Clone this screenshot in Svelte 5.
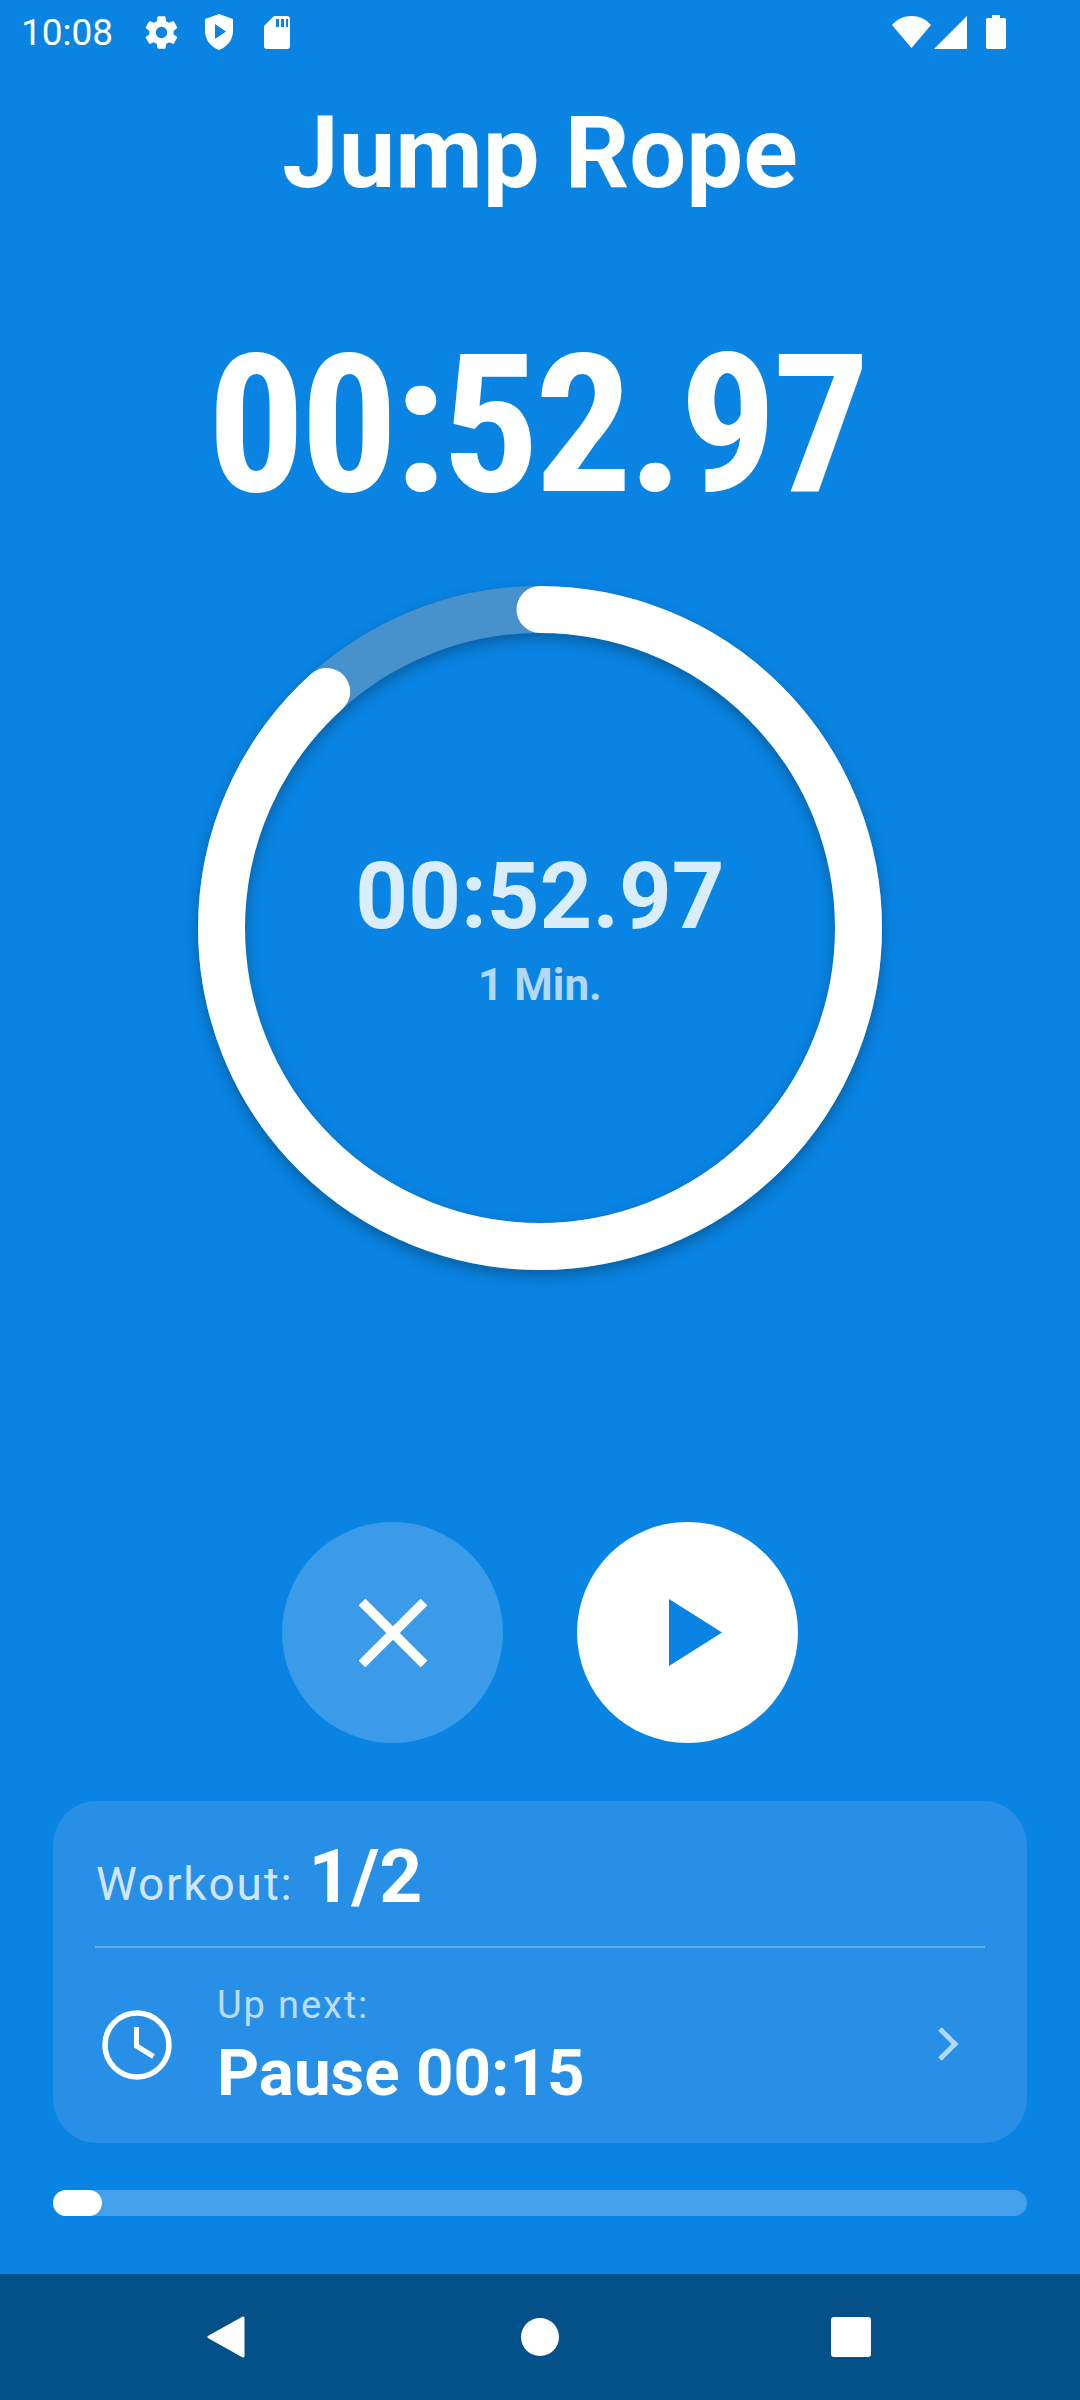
<script>
  const r = 318.5;
  const circumference = 2 * Math.PI * r;
  const elapsed = 52.97 / 60;
  const dash = circumference * elapsed;
</script>

<main class="screen">
  <header class="status">
    <span class="clock">10:08</span>
    <svg class="ic gear" width="39" height="39" viewBox="0 0 24 24"><path fill="#fff" d="M19.4 13c.04-.32.1-.66.1-1s-.06-.68-.1-1l2.1-1.65c.2-.15.25-.42.13-.64l-2-3.46c-.12-.22-.39-.3-.61-.22l-2.49 1c-.52-.39-1.06-.73-1.69-.98l-.37-2.65A.506.506 0 0 0 14 2h-4c-.25 0-.46.18-.5.42l-.37 2.65c-.63.25-1.17.59-1.69.98l-2.49-1c-.22-.08-.49 0-.61.22l-2 3.46c-.13.22-.07.49.12.64L4.57 11c-.04.32-.07.66-.07 1s.03.68.07 1l-2.11 1.65c-.19.15-.25.42-.12.64l2 3.46c.12.22.39.3.61.22l2.49-1c.52.39 1.06.73 1.69.98l.37 2.65c.04.24.25.42.5.42h4c.25 0 .46-.18.5-.42l.37-2.65c.63-.25 1.17-.59 1.69-.98l2.49 1c.22.08.49 0 .61-.22l2-3.46c.12-.22.07-.49-.13-.64L19.4 13zM12 15.500a3.500 3.500 0 1 1 0-7 3.500 3.500 0 0 1 0 7z"/></svg>
    <svg class="ic shield" width="28" height="36" viewBox="0 0 28 36"><path fill="#fff" fill-rule="evenodd" d="M14 0 28 5v12c0 9-6 16-14 19C6 33 0 26 0 17V5zM10 10v15l11-7.500z"/></svg>
    <svg class="ic sd" width="26" height="33" viewBox="0 0 26 33"><path fill="#fff" fill-rule="evenodd" d="M10 0h13a3 3 0 0 1 3 3v27a3 3 0 0 1-3 3H3a3 3 0 0 1-3-3V10zM12 3v8h3V3zM17 3v8h3V3zM22 3v8h2V3z"/></svg>
    <span class="spacer"></span>
    <svg class="ic" width="39" height="32" viewBox="0 0 39 32"><path fill="#fff" d="M19.500 0C27 0 34 3 39 9L19.500 32 0 9C5 3 12 0 19.500 0z"/></svg>
    <svg class="ic cell" width="33" height="33" viewBox="0 0 33 33"><path fill="#fff" d="M33 0v33H0z"/></svg>
    <svg class="ic bat" width="20" height="34" viewBox="0 0 20 34"><path fill="#fff" d="M6 0h8v3h4a2 2 0 0 1 2 2v27a2 2 0 0 1-2 2H2a2 2 0 0 1-2-2V5a2 2 0 0 1 2-2h4z"/></svg>
  </header>

  <h1 class="title">Jump Rope</h1>
  <div class="bigtime">00:52.97</div>

  <section class="dial">
    <svg class="ring" width="720" height="720" viewBox="0 0 720 720">
      <g class="ringshadow">
        <circle cx="360" cy="360" {r} fill="none" stroke="#4791cc" stroke-width="47" />
        <circle
          cx="360"
          cy="360"
          {r}
          fill="none"
          stroke="#fff"
          stroke-width="47"
          stroke-linecap="round"
          stroke-dasharray="{dash} {circumference}"
          transform="rotate(-90 360 360)"
        />
      </g>
    </svg>
    <div class="readout">
      <div class="remain">00:52.97</div>
      <div class="len">1 Min.</div>
    </div>
  </section>

  <div class="controls">
    <button class="round stop" aria-label="Stop">
      <svg width="68" height="68" viewBox="0 0 68 68"><path stroke="#fff" stroke-width="9.500" d="M3 3l62 62M65 3 3 65"/></svg>
    </button>
    <button class="round play" aria-label="Play">
      <svg width="53" height="67" viewBox="0 0 53 67"><path fill="#0984e3" d="M0 0l53 33.500L0 67z"/></svg>
    </button>
  </div>

  <section class="card">
    <div class="workout"><span class="wlabel">Workout:</span> <b>1/2</b></div>
    <div class="rule"></div>
    <div class="next">
      <svg class="clockic" width="70" height="70" viewBox="0 0 70 70">
        <circle cx="35" cy="35" r="32" fill="none" stroke="#fff" stroke-width="5.500" />
        <path fill="none" stroke="#fff" stroke-width="5" d="M34.500 17v19l17 10.500"/>
      </svg>
      <div class="nexttext">
        <div class="uplabel">Up next:</div>
        <div class="upvalue">Pause 00:15</div>
      </div>
      <svg class="chev" width="24" height="36" viewBox="0 0 24 36"><path fill="none" stroke="#fff" stroke-opacity=".65" stroke-width="5" d="M4 3l15 15L4 33"/></svg>
    </div>
  </section>

  <div class="progress"><div class="fill" style="width:{49}px"></div></div>

  <nav class="navbar">
    <svg width="38" height="42" viewBox="0 0 38 42"><path fill="#fff" stroke="#fff" stroke-width="3" stroke-linejoin="round" d="M36 2v38L2 21z"/></svg>
    <span class="dot"></span>
    <span class="sq"></span>
  </nav>
</main>

<style>
  :global(body) {
    margin: 0;
    background: #0984e3;
  }

  .screen {
    width: 1080px;
    height: 2400px;
    background: #0984e3;
    display: flex;
    flex-direction: column;
    font-family: Roboto, sans-serif;
    color: #fff;
    overflow: hidden;
  }

  .status {
    height: 64px;
    display: flex;
    align-items: center;
    padding: 0 74px 0 21px;
    box-sizing: border-box;
    flex: none;
  }

  .clock {
    font-size: 37px;
    width: 121px;
  }

  .ic {
    flex: none;
  }

  .shield {
    margin-left: 24px;
  }

  .sd {
    margin-left: 31px;
  }

  .spacer {
    flex: 1;
  }

  .cell {
    margin-left: 3px;
  }

  .bat {
    margin-left: 19px;
  }

  .title {
    margin: 30px 0 0;
    font-size: 101px;
    line-height: 118px;
    font-weight: 700;
    text-align: center;
  }

  .bigtime {
    margin-top: 98px;
    padding-right: 7px;
    font-size: 193px;
    line-height: 230px;
    font-weight: 700;
    text-align: center;
    font-stretch: 75%;
    letter-spacing: -4.500px;
    font-family: "Roboto Condensed", Roboto, sans-serif;
  }

  .dial {
    margin-top: 28px;
    display: grid;
    justify-items: center;
    align-items: center;
    flex: none;
  }

  .ring,
  .readout {
    grid-area: 1 / 1;
  }

  .ring {
    display: block;
  }

  .ringshadow {
    filter: drop-shadow(0 6px 7px rgba(0, 0, 0, 0.28));
  }

  .readout {
    text-align: center;
  }

  .remain {
    font-size: 92px;
    line-height: 100px;
    font-weight: 700;
    color: rgba(255, 255, 255, 0.85);
  }

  .len {
    font-size: 44px;
    line-height: 50px;
    margin-top: 13px;
    font-weight: 700;
    color: rgba(255, 255, 255, 0.7);
  }

  .controls {
    margin-top: 234px;
    display: flex;
    justify-content: center;
    gap: 74px;
  }

  .round {
    width: 221px;
    height: 221px;
    border: 0;
    padding: 0;
    border-radius: 50%;
    display: flex;
    align-items: center;
    justify-content: center;
  }

  .stop {
    background: #3b9be8;
  }

  .play {
    background: #fff;
  }

  .play svg {
    margin-left: 15px;
  }

  .card {
    margin: 58px 53px 0;
    height: 342px;
    flex: none;
    box-sizing: border-box;
    background: #2790e6;
    border-radius: 44px;
    padding: 0 42px;
  }

  .workout {
    height: 145px;
    display: flex;
    align-items: center;
    gap: 15px;
    padding-left: 1px;
  }

  .wlabel {
    font-size: 46px;
    letter-spacing: 1.800px;
    color: rgba(255, 255, 255, 0.8);
    margin-top: 20px;
  }

  .workout b {
    font-size: 75px;
    font-weight: 700;
    margin-top: 4px;
  }

  .rule {
    height: 2px;
    background: rgba(255, 255, 255, 0.25);
  }

  .next {
    height: 195px;
    display: flex;
    align-items: center;
    padding-left: 7px;
    padding-right: 25px;
  }

  .clockic {
    margin-bottom: 2px;
  }

  .chev {
    margin-bottom: 4px;
  }

  .nexttext {
    margin-left: 45px;
    flex: 1;
  }

  .uplabel {
    font-size: 38px;
    line-height: 44px;
    letter-spacing: 1.900px;
    color: rgba(255, 255, 255, 0.7);
  }

  .upvalue {
    font-size: 65.500px;
    line-height: 72px;
    font-weight: 700;
    margin-top: 10px;
  }

  .progress {
    margin: 47px 53px 0;
    height: 26px;
    background: #44a0ea;
    border-radius: 13px;
    flex: none;
  }

  .fill {
    height: 100%;
    background: #fff;
    border-radius: 13px;
  }

  .navbar {
    margin-top: auto;
    height: 126px;
    background: #045089;
    display: grid;
    grid-template-columns: 207px 38px 276px 38px 272px 40px 1fr;
    align-items: center;
    flex: none;
  }

  .navbar svg {
    grid-column: 2;
  }

  .dot {
    grid-column: 4;
    width: 38px;
    height: 38px;
    border-radius: 50%;
    background: #fff;
  }

  .sq {
    grid-column: 6;
    width: 40px;
    height: 40px;
    border-radius: 3px;
    background: #fff;
  }
</style>
